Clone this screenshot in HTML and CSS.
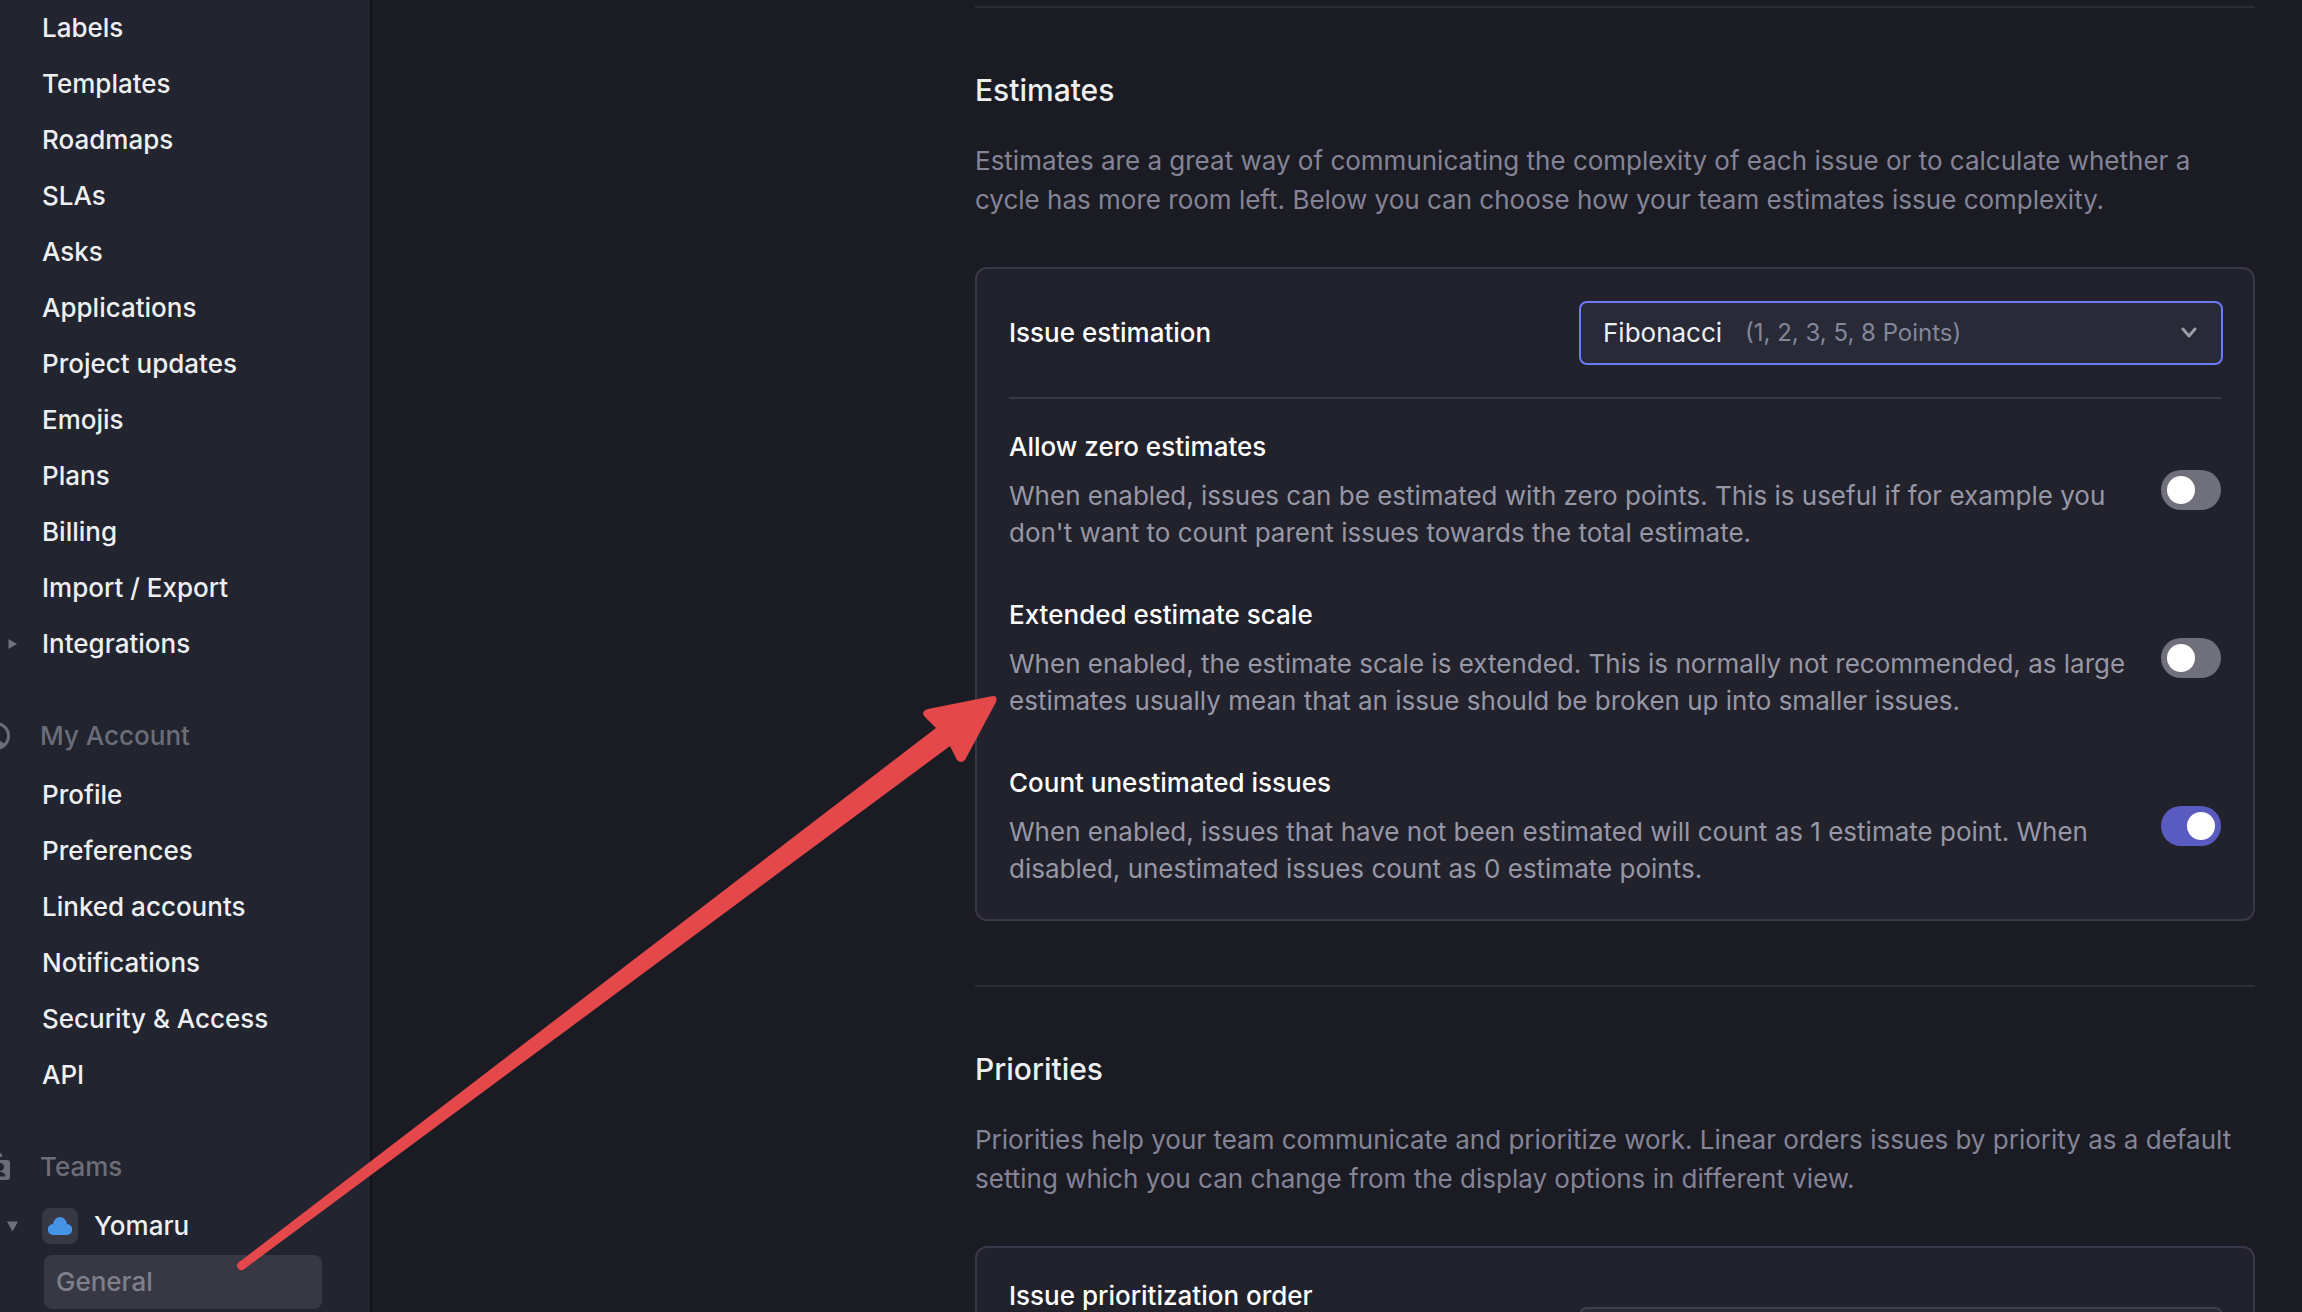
FILE: index.html
```
<!DOCTYPE html>
<html lang="en">
<head>
<meta charset="UTF-8">
<meta name="viewport" content="width=device-width, initial-scale=1.0">
<title>Team settings</title>
<link rel="stylesheet" href="styles.css">
</head>
<body>

<div class="app">
    <nav class="sidebar">
        <ul class="nav-list">
            <li><a href="#">Labels</a></li>
            <li><a href="#">Templates</a></li>
            <li><a href="#">Roadmaps</a></li>
            <li><a href="#">SLAs</a></li>
            <li><a href="#">Asks</a></li>
            <li><a href="#">Applications</a></li>
            <li><a href="#">Project updates</a></li>
            <li><a href="#">Emojis</a></li>
            <li><a href="#">Plans</a></li>
            <li><a href="#">Billing</a></li>
            <li><a href="#">Import / Export</a></li>
            <li>
                <svg class="caret" viewBox="0 0 12 12"><path d="M2.500 1 11 6 2.500 11z"/></svg>
                <a href="#">Integrations</a>
            </li>
        </ul>

        <h2 class="nav-title">
            <svg class="nav-icon" viewBox="0 0 28 28">
                <circle cx="14" cy="14" r="12.500" fill="none" stroke="currentColor" stroke-width="3"/>
                <circle cx="14" cy="11" r="4"/>
                <path d="M5 23a9.500 6.500 0 0 1 18 0A13 13 0 0 1 5 23z"/>
            </svg>
            My Account
        </h2>
        <ul class="nav-list">
            <li><a href="#">Profile</a></li>
            <li><a href="#">Preferences</a></li>
            <li><a href="#">Linked accounts</a></li>
            <li><a href="#">Notifications</a></li>
            <li><a href="#">Security &amp; Access</a></li>
            <li><a href="#">API</a></li>
        </ul>

        <h2 class="nav-title">
            <svg class="nav-icon" viewBox="0 0 28 28">
                <path fill-rule="evenodd" d="M12 7h13a3 3 0 0 1 3 3v14a3 3 0 0 1-3 3H12zM18 10a4 4 0 1 0 .1 0zM13 23.500h10.500c0-6-10.500-6-10.500 0z"/>
                <path d="M4 0h14a2 2 0 0 1 2 2v2H4z"/>
            </svg>
            Teams
        </h2>
        <ul class="nav-list">
            <li>
                <svg class="caret" viewBox="0 0 12 12"><path d="M1 1.500h11L6.500 11.500z"/></svg>
                <a class="team" href="#">
                    <span class="team-icon">
                        <svg viewBox="0 0 24 18"><path d="M5.500 18A5.500 5.500 0 0 1 5 7Q6.500 0 12 0T19 7A5.500 5.500 0 0 1 18.500 18z"/></svg>
                    </span>
                    Yomaru
                </a>
            </li>
            <li><a class="active" href="#">General</a></li>
        </ul>
    </nav>

    <main class="content">
        <section class="section">
            <h1>Estimates</h1>
            <p class="intro">Estimates are a great way of communicating the complexity of each issue or to calculate whether a cycle has more room left. Below you can choose how your team estimates issue complexity.</p>

            <div class="card">
                <div class="select-row">
                    <label for="estimation">Issue estimation</label>
                    <div class="select-box focused">
                        <select id="estimation">
                            <option>Fibonacci</option>
                        </select>
                        <span class="hint">(1, 2, 3, 5, 8 Points)</span>
                        <svg class="chevron" viewBox="0 0 16 12"><path d="M2 2l6 7 6-7"/></svg>
                    </div>
                </div>

                <div class="toggles">
                    <div class="toggle-row">
                        <div class="text">
                            <label for="zero">Allow zero estimates</label>
                            <p>When enabled, issues can be estimated with zero points. This is useful if for example you don't want to count parent issues towards the total estimate.</p>
                        </div>
                        <input class="toggle" type="checkbox" id="zero">
                    </div>
                    <div class="toggle-row">
                        <div class="text">
                            <label for="extended">Extended estimate scale</label>
                            <p>When enabled, the estimate scale is extended. This is normally not recommended, as large estimates usually mean that an issue should be broken up into smaller issues.</p>
                        </div>
                        <input class="toggle" type="checkbox" id="extended">
                    </div>
                    <div class="toggle-row">
                        <div class="text">
                            <label for="unestimated">Count unestimated issues</label>
                            <p>When enabled, issues that have not been estimated will count as 1 estimate point. When disabled, unestimated issues count as 0 estimate points.</p>
                        </div>
                        <input class="toggle" type="checkbox" id="unestimated" checked>
                    </div>
                </div>
            </div>
        </section>

        <section class="section">
            <h1>Priorities</h1>
            <p class="intro">Priorities help your team communicate and prioritize work. Linear orders issues by priority as a default setting which you can change from the display options in different view.</p>

            <div class="card">
                <div class="select-row tall">
                    <label for="order">Issue prioritization order</label>
                    <div class="select-box">
                        <select id="order"></select>
                    </div>
                </div>
            </div>
        </section>
    </main>

    <!-- arrow from General to the estimate settings -->
    <svg class="arrow" width="770" height="590" viewBox="0 0 770 590">
        <path d="M8 576 706 41 694 29Q691 24 698 22L763 9Q768 9 766 15L735 73Q731 77 727 73L720 59 13 583A4.500 4.500 0 0 1 8 576z"/>
    </svg>
</div>

</body>
</html>
```
FILE: styles.css
```
* {
    box-sizing: border-box;
}
body {
    margin: 0;
    height: 100vh;
    overflow: hidden;
    background-color: #1b1b23;
    color: #eeeff1;
    font-family: Inter, sans-serif;
    font-size: 26px;
    line-height: 36px;
}
.app {
    position: relative;
    display: flex;
    height: 100vh;
    overflow: hidden;
}

/* sidebar */
.sidebar {
    flex: 0 0 372px;
    overflow: hidden;
    background-color: #22242f;
    border-right: 2px solid #121217;
}
.nav-list {
    margin: 0;
    padding: 0;
    list-style: none;
}
.nav-list li {
    display: flex;
    align-items: center;
    height: 56px;
    padding-left: 42px;
}
.nav-list a {
    color: #eeeff1;
    font-weight: 500;
    text-decoration: none;
}
.caret {
    flex: none;
    width: 12px;
    height: 12px;
    margin-left: -36px;
    margin-right: 24px;
    fill: #6f717c;
}
.nav-title {
    display: flex;
    align-items: center;
    gap: 30px;
    height: 50px;
    margin: 39px 0 6px;
    color: #6b6d78;
    font-size: 26px;
    font-weight: 500;
}
.nav-icon {
    flex: none;
    width: 28px;
    height: 28px;
    margin-left: -18px;
    fill: currentColor;
}
.team {
    display: flex;
    align-items: center;
    gap: 16px;
}
.team-icon {
    display: flex;
    align-items: center;
    justify-content: center;
    width: 36px;
    height: 36px;
    border-radius: 8px;
    background-color: #383844;
}
.team-icon svg {
    width: 24px;
    height: 18px;
    fill: #4793e6;
}
.nav-list .active {
    width: 278px;
    margin-left: 2px;
    padding: 9px 12px;
    border-radius: 8px;
    background-color: #383844;
    color: #7e808c;
}

/* content */
.content {
    flex: 1;
    max-width: 1327px;
    margin-left: auto;
    padding: 6px 47px 0 0;
}
.section {
    padding: 62px 0 64px;
    border-top: 2px solid #2b2b38;
}
h1 {
    margin: 0 0 31px;
    font-size: 30px;
    font-weight: 500;
    line-height: 40px;
}
.intro {
    margin: 0 0 48px;
    color: #858496;
    line-height: 39px;
}
.card {
    padding: 0 32px;
    border: 2px solid #393848;
    border-radius: 12px;
    background-color: #22222d;
}
.card label {
    color: #fff;
    font-weight: 500;
}
.select-row {
    display: flex;
    align-items: center;
    justify-content: space-between;
    padding: 32px 0;
    border-bottom: 2px solid #393848;
}
.select-row.tall {
    min-height: 184px;
    padding: 30px 0;
}
.select-row.tall label {
    align-self: flex-start;
}

/* the select, its hint and its chevron share one grid cell */
.select-box {
    display: grid;
    align-items: center;
    flex: 0 0 644px;
    margin-right: -2px;
}
.select-box > * {
    grid-area: 1 / 1;
}
select {
    width: 100%;
    height: 64px;
    padding: 0 22px;
    appearance: none;
    border: 2px solid #3e3e4c;
    border-radius: 8px;
    background-color: #282a37;
    color: #eeeff1;
    font: inherit;
}
.focused select {
    border-color: #6e79f5;
}
.hint {
    margin-left: 166px;
    color: #858699;
    font-size: 24px;
    pointer-events: none;
}
.chevron {
    justify-self: end;
    width: 16px;
    height: 12px;
    margin-right: 26px;
    fill: none;
    stroke: #9a9ba8;
    stroke-width: 3;
    stroke-linecap: round;
    stroke-linejoin: round;
    pointer-events: none;
}
.toggles {
    display: flex;
    flex-direction: column;
    gap: 46px;
    padding: 30px 0 32px;
}
.toggle-row {
    display: flex;
    align-items: center;
    justify-content: space-between;
    gap: 32px;
}
.text p {
    margin: 12px 0 0;
    color: #9797a6;
    line-height: 37px;
}
.toggle {
    flex: none;
    display: flex;
    align-items: center;
    width: 60px;
    height: 40px;
    margin: 0;
    padding: 0 6px;
    appearance: none;
    border-radius: 20px;
    background-color: #6f707c;
}
.toggle::before {
    content: "";
    width: 28px;
    height: 28px;
    border-radius: 50%;
    background-color: #fff;
}
.toggle:checked {
    justify-content: flex-end;
    background-color: #595bc0;
}

.arrow {
    position: absolute;
    left: 230px;
    top: 687px;
    fill: #e5484b;
    pointer-events: none;
}
```
